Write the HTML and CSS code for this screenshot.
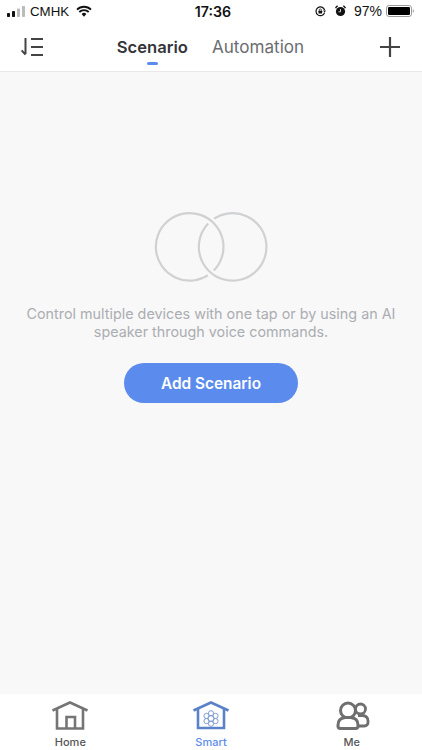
FILE: index.html
```html
<!DOCTYPE html>
<html lang="en">
<head>
<meta charset="utf-8">
<title>Smart</title>
<link rel="stylesheet" href="styles.css">
</head>
<body>
<div class="app">
  <div class="status">
    <div class="status-left">
      <svg class="signal" width="18" height="11" viewBox="0 0 18 11">
        <rect x="0" y="7" width="3" height="4" rx=".7" fill="#111"/>
        <rect x="5" y="5" width="3" height="6" rx=".7" fill="#111"/>
        <rect x="10" y="2.5" width="3" height="8.5" rx=".7" fill="#bbb"/>
        <rect x="15" y="0" width="3" height="11" rx=".7" fill="#bbb"/>
      </svg>
      <span class="carrier">CMHK</span>
      <svg class="wifi" width="16" height="12" viewBox="0 0 16 12">
        <path d="M8 11.8 5.6 9a3.4 3.4 0 0 1 4.8 0Z" fill="#111"/>
        <path d="M1 4.6a10 10 0 0 1 14 0M3.3 7a6.8 6.8 0 0 1 9.4 0" fill="none" stroke="#111" stroke-width="1.9"/>
      </svg>
    </div>
    <div class="time">17:36</div>
    <div class="status-right">
      <svg width="11" height="11" viewBox="0 0 11 11">
        <path d="M9.6 6.6A4.4 4.4 0 1 1 9.6 4" fill="none" stroke="#111" stroke-width="1.2"/>
        <path d="M8 4.6h3L9.5 6.6Z" fill="#111"/>
        <rect x="3.5" y="4.8" width="3.6" height="2.8" rx=".4" fill="#111"/>
        <path d="M4.2 5V4a1.1 1.1 0 0 1 2.2 0v1" fill="none" stroke="#111" stroke-width=".7"/>
      </svg>
      <svg class="alarm" width="11" height="12" viewBox="0 0 11 12">
        <circle cx="5.5" cy="6.5" r="4.6" fill="#111"/>
        <path d="M5.5 4v2.8H3.5" fill="none" stroke="#fff" stroke-width=".8"/>
        <path d="M.4 3 2.6.8M10.6 3 8.4.8" stroke="#111" stroke-width="1.4"/>
      </svg>
      <span class="battery-pct">97%</span>
      <svg width="28" height="12" viewBox="0 0 28 12">
        <rect x=".5" y=".5" width="25" height="11" rx="2.6" fill="none" stroke="#999"/>
        <rect x="2" y="2" width="22" height="8" rx="1.2" fill="#000"/>
        <path d="M26.8 4.2c.8.2 1.2.8 1.2 1.8s-.4 1.6-1.2 1.8Z" fill="#aaa"/>
      </svg>
    </div>
  </div>

  <header class="nav">
    <svg class="sort" width="24" height="20" viewBox="0 0 24 20">
      <path d="M5.5 1v16M1.6 13.4 5.5 17.6" fill="none" stroke="#444" stroke-width="2"/>
      <path d="M11 2h12M11 10h12M11 18h12" fill="none" stroke="#444" stroke-width="2"/>
    </svg>
    <div class="tabs">
      <div class="tab tab-active">Scenario</div>
      <div class="tab">Automation</div>
    </div>
    <svg class="plus" width="22" height="22" viewBox="0 0 22 22">
      <path d="M11 1v20M1 11h20" fill="none" stroke="#444" stroke-width="2.2"/>
    </svg>
  </header>

  <main class="main">
    <svg class="rings" width="114" height="72" viewBox="0 0 114 72">
      <path d="M53.9 64.3A33.8 33.8 0 1 1 59.8 59.5" fill="none" stroke="#d0d1d3" stroke-width="2.2"/>
      <path d="M60.1 7.6A33.8 33.8 0 1 1 54.2 12.5" fill="none" stroke="#d0d1d3" stroke-width="2.2"/>
    </svg>
    <p class="hint">Control multiple devices with one tap or by using an AI speaker through voice commands.</p>
    <button class="add">Add Scenario</button>
  </main>

  <nav class="tabbar">
    <div class="item">
      <svg width="40" height="32" viewBox="0 0 40 32">
        <path d="M2.5 10.5 20 2.5l17.5 8" fill="none" stroke="#757575" stroke-width="2.6"/>
        <path d="M7 8.5V28.5H33V8.5M16.5 28.5V17H25V28.5" fill="none" stroke="#757575" stroke-width="2.6"/>
      </svg>
      <span class="label">Home</span>
    </div>
    <div class="item item-active">
      <svg width="40" height="32" viewBox="0 0 40 32">
        <path d="M2.5 10.5 20 2.5l17.5 8" fill="none" stroke="#5b82c9" stroke-width="2.6"/>
        <path d="M7 8.5V28H33V8.5" fill="none" stroke="#5b82c9" stroke-width="2.6"/>
        <g fill="none" stroke="#7f9cd3" stroke-width="1">
          <circle cx="20" cy="18.5" r="3"/>
          <circle cx="20" cy="13.3" r="2.6"/>
          <circle cx="20" cy="23.7" r="2.6"/>
          <circle cx="15.5" cy="15.9" r="2.6"/>
          <circle cx="24.5" cy="15.9" r="2.6"/>
          <circle cx="15.5" cy="21.1" r="2.6"/>
          <circle cx="24.5" cy="21.1" r="2.6"/>
        </g>
      </svg>
      <span class="label">Smart</span>
    </div>
    <div class="item">
      <svg width="40" height="32" viewBox="0 0 40 32">
        <circle cx="16" cy="10.5" r="7.5" fill="none" stroke="#6f6f6f" stroke-width="3"/>
        <path d="M26 15.5h5c3 .5 5 2.5 5 5.5v1.500c0 2-1.500 3.500-3.500 3.500H26" fill="none" stroke="#6f6f6f" stroke-width="2.8"/>
        <circle cx="28.5" cy="9" r="5" fill="#fff" stroke="#6f6f6f" stroke-width="2.8"/>
        <path d="M6 25c0-4.500 3-7 7-7.500h6c4 .5 7 3 7 7.500v1c0 1.500-1 2.500-2.500 2.500h-15C7 28.500 6 27.500 6 26Z" fill="#fff" stroke="#6f6f6f" stroke-width="3"/>
      </svg>
      <span class="label">Me</span>
    </div>
  </nav>
</div>
</body>
</html>
```

FILE: styles.css
```css
* { box-sizing: border-box; }
html, body { margin: 0; height: 100%; }
body { font-family: Inter, "Liberation Sans", sans-serif; background: #fff; }
svg { display: block; flex: none; }

.app { display: flex; flex-direction: column; height: 750px; width: 422px; overflow: hidden; }

.status {
  height: 22px;
  display: grid;
  grid-template-columns: 1fr auto 1fr;
  align-items: center;
  padding: 0 8px 0 7px;
  color: #111;
}
.status-left { display: flex; align-items: center; }
.carrier { margin-left: 5px; font-family: "Liberation Sans", sans-serif; font-size: 13.3px; }
.wifi { margin-left: 7px; }
.time { margin-left: 5px; font-weight: 600; font-size: 14.2px; }
.status-right { display: flex; align-items: center; justify-content: flex-end; }
.alarm { margin-left: 9px; }
.battery-pct { margin-left: 8px; margin-right: 4px; font-family: "Liberation Sans", sans-serif; font-size: 14px; }

.nav {
  height: 50px;
  flex: none;
  display: grid;
  grid-template-columns: 1fr auto 1fr;
  align-items: center;
  padding: 0 21px 0 20px;
  border-bottom: 1px solid #e8e8e8;
}
.tabs { display: flex; gap: 24px; }
.plus { justify-self: end; }
.tab { position: relative; font-size: 17.1px; line-height: 24px; color: #6b6d70; white-space: nowrap; }
.tab-active { color: #33353a; font-size: 16.6px; font-weight: 600; }
.tab-active::after {
  content: "";
  position: absolute;
  left: 30px;
  bottom: -6px;
  width: 11px;
  height: 3px;
  border-radius: 2px;
  background: #5a8bed;
}

.main {
  flex: 1;
  background: #f8f8f8;
  display: flex;
  flex-direction: column;
  align-items: center;
  padding-top: 139px;
}
.hint {
  margin: 22px 0 0;
  padding: 0 24px;
  text-align: center;
  font-size: 14.35px;
  line-height: 18px;
  color: #abadb2;
}
.add {
  margin-top: 22px;
  width: 174px;
  height: 40px;
  border: 0;
  border-radius: 20px;
  background: #5a8bed;
  color: #fff;
  font-family: inherit;
  font-size: 15.4px;
  font-weight: 600;
}

.tabbar {
  height: 56px;
  flex: none;
  background: #fff;
  display: grid;
  grid-template-columns: repeat(3, 1fr);
  padding-top: 6px;
}
.item { display: flex; flex-direction: column; align-items: center; color: #555; }
.item-active { color: #5a8bed; }
.label { font-size: 11px; line-height: 14px; font-weight: 500; margin-top: 3px; }
```
